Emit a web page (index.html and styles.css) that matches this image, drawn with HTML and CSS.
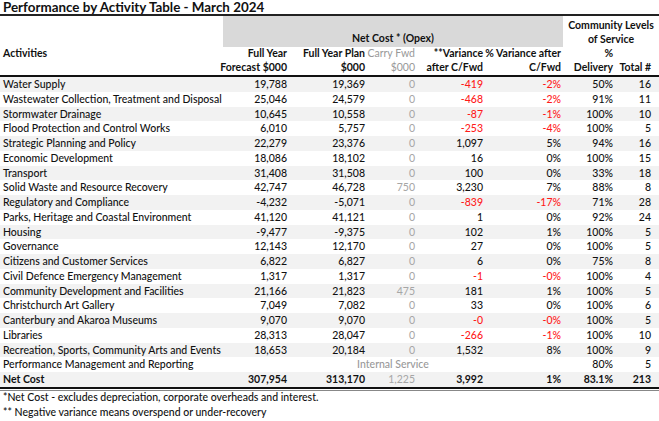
FILE: index.html
```html
<!DOCTYPE html>
<html>
<head>
<meta charset="utf-8">
<link rel="stylesheet" href="styles.css">
</head>
<body>
<div class="sheet">
  <div class="title">Performance by Activity Table - March 2024</div>
  <div class="hdr1">
    <div class="h-blank"></div>
    <div class="h-net">Net Cost * (Opex)</div>
    <div class="h-cls"><span>Community Levels</span><span>of Service</span></div>
  </div>
  <div class="hdr2">
    <div class="h-act">Activities</div>
    <div class="hc"><span>Full Year</span><span>Forecast $000</span></div>
    <div class="hc"><span>Full Year Plan</span><span>$000</span></div>
    <div class="hc muted"><span>Carry Fwd</span><span>$000</span></div>
    <div class="hc"><span>**Variance</span><span>after C/Fwd</span></div>
    <div class="hc"><span>% Variance after</span><span>C/Fwd</span></div>
    <div class="hc"><span>%</span><span>Delivery</span></div>
    <div class="hc last"><span>&nbsp;</span><span>Total #</span></div>
  </div>
  <div class="rows">
    <div class="row"><span class="act">Water Supply</span><span>19,788</span><span>19,369</span><span class="cf">0</span><span class="neg">-419</span><span class="neg">-2%</span><span>50%</span><span class="last">16</span></div>
    <div class="row"><span class="act">Wastewater Collection, Treatment and Disposal</span><span>25,046</span><span>24,579</span><span class="cf">0</span><span class="neg">-468</span><span class="neg">-2%</span><span>91%</span><span class="last">11</span></div>
    <div class="row"><span class="act">Stormwater Drainage</span><span>10,645</span><span>10,558</span><span class="cf">0</span><span class="neg">-87</span><span class="neg">-1%</span><span>100%</span><span class="last">10</span></div>
    <div class="row"><span class="act">Flood Protection and Control Works</span><span>6,010</span><span>5,757</span><span class="cf">0</span><span class="neg">-253</span><span class="neg">-4%</span><span>100%</span><span class="last">5</span></div>
    <div class="row"><span class="act">Strategic Planning and Policy</span><span>22,279</span><span>23,376</span><span class="cf">0</span><span>1,097</span><span>5%</span><span>94%</span><span class="last">16</span></div>
    <div class="row"><span class="act">Economic Development</span><span>18,086</span><span>18,102</span><span class="cf">0</span><span>16</span><span>0%</span><span>100%</span><span class="last">15</span></div>
    <div class="row"><span class="act">Transport</span><span>31,408</span><span>31,508</span><span class="cf">0</span><span>100</span><span>0%</span><span>33%</span><span class="last">18</span></div>
    <div class="row"><span class="act">Solid Waste and Resource Recovery</span><span>42,747</span><span>46,728</span><span class="cf">750</span><span>3,230</span><span>7%</span><span>88%</span><span class="last">8</span></div>
    <div class="row"><span class="act">Regulatory and Compliance</span><span>-4,232</span><span>-5,071</span><span class="cf">0</span><span class="neg">-839</span><span class="neg">-17%</span><span>71%</span><span class="last">28</span></div>
    <div class="row"><span class="act">Parks, Heritage and Coastal Environment</span><span>41,120</span><span>41,121</span><span class="cf">0</span><span>1</span><span>0%</span><span>92%</span><span class="last">24</span></div>
    <div class="row"><span class="act">Housing</span><span>-9,477</span><span>-9,375</span><span class="cf">0</span><span>102</span><span>1%</span><span>100%</span><span class="last">5</span></div>
    <div class="row"><span class="act">Governance</span><span>12,143</span><span>12,170</span><span class="cf">0</span><span>27</span><span>0%</span><span>100%</span><span class="last">5</span></div>
    <div class="row"><span class="act">Citizens and Customer Services</span><span>6,822</span><span>6,827</span><span class="cf">0</span><span>6</span><span>0%</span><span>75%</span><span class="last">8</span></div>
    <div class="row"><span class="act">Civil Defence Emergency Management</span><span>1,317</span><span>1,317</span><span class="cf">0</span><span class="neg">-1</span><span class="neg">-0%</span><span>100%</span><span class="last">4</span></div>
    <div class="row"><span class="act">Community Development and Facilities</span><span>21,166</span><span>21,823</span><span class="cf">475</span><span>181</span><span>1%</span><span>100%</span><span class="last">5</span></div>
    <div class="row"><span class="act">Christchurch Art Gallery</span><span>7,049</span><span>7,082</span><span class="cf">0</span><span>33</span><span>0%</span><span>100%</span><span class="last">6</span></div>
    <div class="row"><span class="act">Canterbury and Akaroa Museums</span><span>9,070</span><span>9,070</span><span class="cf">0</span><span class="neg">-0</span><span class="neg">-0%</span><span>100%</span><span class="last">5</span></div>
    <div class="row"><span class="act">Libraries</span><span>28,313</span><span>28,047</span><span class="cf">0</span><span class="neg">-266</span><span class="neg">-1%</span><span>100%</span><span class="last">10</span></div>
    <div class="row"><span class="act">Recreation, Sports, Community Arts and Events</span><span>18,653</span><span>20,184</span><span class="cf">0</span><span>1,532</span><span>8%</span><span>100%</span><span class="last">9</span></div>
    <div class="row"><span class="act">Performance Management and Reporting</span><span class="internal">Internal Service</span><span>80%</span><span class="last">5</span></div>
    <div class="row total"><span class="act">Net Cost</span><span>307,954</span><span>313,170</span><span class="cf">1,225</span><span>3,992</span><span>1%</span><span>83.1%</span><span class="last">213</span></div>
  </div>
  <div class="notes">
    <p>*Net Cost - excludes depreciation, corporate overheads and interest.</p>
    <p>** Negative variance means overspend or under-recovery</p>
  </div>
</div>
</body>
</html>
```

FILE: styles.css
```css
* { box-sizing: border-box; }
html, body { margin: 0; padding: 0; background: #fff; }
body {
  font-family: Lato, "Liberation Sans", sans-serif;
  font-size: 10.5px;
  font-weight: 500;
  color: #111;
}
.sheet {
  width: 659px;
  --cols: 223px 66px 78px 50px 68px 78px 52px 44px;
}
.title {
  height: 14px;
  line-height: 15px;
  font-weight: 700;
  font-size: 13.4px;
  padding-left: 3px;
  white-space: nowrap;
}
.hdr1 {
  display: grid;
  grid-template-columns: 223px 340px 96px;
  height: 32px;
  border-top: 2px solid #222;
}
.h-net {
  background: #d9d9d9;
  font-weight: 700;
  text-align: center;
  display: flex;
  align-items: flex-end;
  justify-content: center;
  line-height: 14.5px;
  padding-bottom: 1px;
}
.h-cls {
  font-weight: 700;
  display: flex;
  flex-direction: column;
  align-items: center;
  line-height: 14.5px;
  padding-top: 1.5px;
}
.hdr2 {
  display: grid;
  grid-template-columns: var(--cols);
  height: 31px;
  border-bottom: 2px solid #111;
  line-height: 14px;
  font-weight: 700;
}
.h-act { padding-left: 3px; }
.hc {
  display: flex;
  flex-direction: column;
  align-items: flex-end;
  padding-right: 2px;
}
.hc span { white-space: nowrap; }
.hc.muted { color: #999; font-weight: 400; }
.hc.last { padding-right: 8px; }
.row {
  display: grid;
  grid-template-columns: var(--cols);
  height: 14.75px;
  line-height: 14.75px;
}
.row:nth-child(odd) { background: #f2f2f2; }
.row span {
  text-align: right;
  padding-right: 2px;
  white-space: nowrap;
}
.row span.act { text-align: left; padding-left: 3px; padding-right: 0; }
.row span.last { padding-right: 8px; }
.row span.cf { color: #a6a6a6; font-weight: 400; }
.row span.neg { color: #ff1a1a; }
.row span.internal {
  grid-column: 2 / 7;
  text-align: center;
  color: #999;
  padding-right: 0;
}
.row.total {
  font-weight: 700;
  height: 16.75px;
  border-bottom: 2px solid #111;
  box-shadow: 0 1px 0 #fff, 0 2px 0 #888;
}
.notes p {
  margin: 0;
  line-height: 14.75px;
  padding-left: 3px;
}
.notes { padding-top: 1px; }
```
